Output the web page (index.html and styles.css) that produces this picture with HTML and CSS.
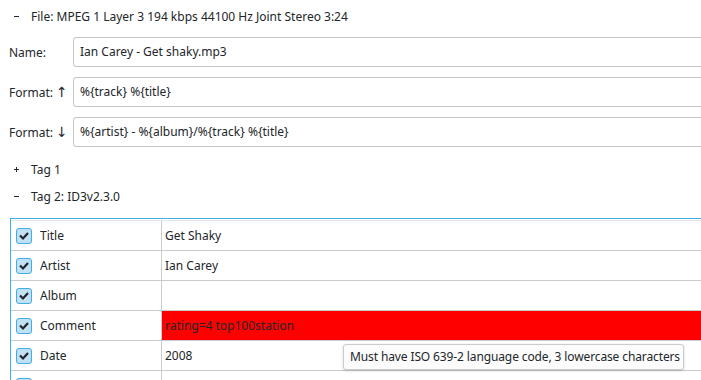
FILE: index.html
```html
<!DOCTYPE html>
<html>
  <head>
    <meta charset="UTF-8" />
    <title>Tag Editor</title>
    <link rel="stylesheet" href="styles.css">
  </head>
  <body>
    <div class="page">
      <div class="section-head">
        <span class="expander"><svg width="7" height="7" viewBox="0 0 7 7"><path d="M1 3.5h5" stroke="#232629" stroke-width="1"/></svg></span>
        File: MPEG 1 Layer 3 194 kbps 44100 Hz Joint Stereo 3:24
      </div>

      <div class="form">
        <div class="form-row">
          <label class="form-label">Name:</label>
          <div class="field">Ian Carey - Get shaky.mp3</div>
        </div>
        <div class="form-row">
          <label class="form-label">Format: <span class="arrow">↑</span></label>
          <div class="field">%{track} %{title}</div>
        </div>
        <div class="form-row">
          <label class="form-label">Format: <span class="arrow">↓</span></label>
          <div class="field">%{artist} - %{album}/%{track} %{title}</div>
        </div>
      </div>

      <div class="tags">
        <div class="section-head">
          <span class="expander"><svg width="7" height="7" viewBox="0 0 7 7"><path d="M1 3.5h5M3.5 1v5" stroke="#232629" stroke-width="1"/></svg></span>
          Tag 1
        </div>
        <div class="section-head">
          <span class="expander"><svg width="7" height="7" viewBox="0 0 7 7"><path d="M1 3.5h5" stroke="#232629" stroke-width="1"/></svg></span>
          Tag 2: ID3v2.3.0
        </div>
      </div>

      <div class="frames">
        <div class="frame-row">
          <div class="frame-name"><span class="check"></span>Title</div>
          <div class="frame-value">Get Shaky</div>
        </div>
        <div class="frame-row">
          <div class="frame-name"><span class="check"></span>Artist</div>
          <div class="frame-value">Ian Carey</div>
        </div>
        <div class="frame-row">
          <div class="frame-name"><span class="check"></span>Album</div>
          <div class="frame-value"></div>
        </div>
        <div class="frame-row">
          <div class="frame-name"><span class="check"></span>Comment</div>
          <div class="frame-value invalid">rating=4 top100station</div>
        </div>
        <div class="frame-row">
          <div class="frame-name"><span class="check"></span>Date</div>
          <div class="frame-value">2008</div>
        </div>
        <div class="frame-row">
          <div class="frame-name"><span class="check"></span></div>
          <div class="frame-value"></div>
        </div>
      </div>

      <div class="tooltip">Must have ISO 639-2 language code, 3 lowercase characters</div>
    </div>
  </body>
</html>
```

FILE: styles.css
```css
html,
body {
  margin: 0;
  padding: 0;
  height: 100%;
  overflow: hidden;
  background-color: #ffffff;
  color: #232629;
  font-family: "Noto Sans", sans-serif;
  font-size: 12px;
}

.page {
  position: relative;
  height: 100%;
  padding-top: 3px;
  box-sizing: border-box;
}

.section-head {
  display: flex;
  align-items: center;
  height: 27px;
  white-space: nowrap;
}

.expander {
  display: flex;
  align-items: center;
  width: 31px;
  padding-left: 13px;
  box-sizing: border-box;
}

.form {
  display: flex;
  flex-direction: column;
  gap: 10px;
  margin-top: 7px;
}

.form-row {
  display: flex;
  align-items: center;
  height: 30px;
}

.form-label {
  width: 73px;
  padding-left: 9px;
  box-sizing: border-box;
  flex-shrink: 0;
}

.arrow {
  font-family: "DejaVu Sans", sans-serif;
  font-size: 14px;
  line-height: 1;
}

.field {
  flex: 1;
  height: 30px;
  line-height: 28px;
  margin-right: -20px;
  padding-left: 6px;
  border: 1px solid #c3c5c6;
  border-radius: 3px;
  box-sizing: border-box;
  white-space: nowrap;
}

.tags {
  margin-top: 9px;
}

.frames {
  margin-top: 8px;
  margin-left: 10px;
  margin-right: -20px;
  border-top: 1px solid #3daee9;
  border-left: 1px solid #3daee9;
  padding-top: 1px;
}

.frame-row {
  display: flex;
  height: 30px;
  border-top: 1px solid #c9cbcd;
  box-sizing: border-box;
}

.frame-row:first-child {
  border-top-color: #e3e4e5;
}

.frame-name {
  display: flex;
  align-items: center;
  gap: 8px;
  width: 151px;
  padding-left: 5px;
  border-right: 1px solid #c9cbcd;
  box-sizing: border-box;
  flex-shrink: 0;
}

.frame-value {
  flex: 1;
  display: flex;
  align-items: center;
  padding-left: 3px;
}

.frame-value.invalid {
  background-color: #ff0000;
}

.check {
  width: 16px;
  height: 16px;
  box-sizing: border-box;
  border: 1px solid #3daee9;
  border-radius: 3px;
  background-color: #c2e1f5;
  background-image: url("data:image/svg+xml;utf8,<svg xmlns='http://www.w3.org/2000/svg' width='14' height='14' viewBox='0 0 14 14'><path d='M3 6.5l3 3 5-5.5' fill='none' stroke='%23232629' stroke-width='2.2'/></svg>");
  background-repeat: no-repeat;
  background-position: center;
}

.tooltip {
  position: absolute;
  left: 343px;
  top: 344px;
  width: 341px;
  height: 26px;
  line-height: 24px;
  padding-left: 6px;
  box-sizing: border-box;
  background-color: #fcfcfc;
  border: 1px solid #c9cbcd;
  border-radius: 3px;
  box-shadow: 0 1px 3px rgba(0, 0, 0, 0.15);
  letter-spacing: -0.12px;
  white-space: nowrap;
}
```
